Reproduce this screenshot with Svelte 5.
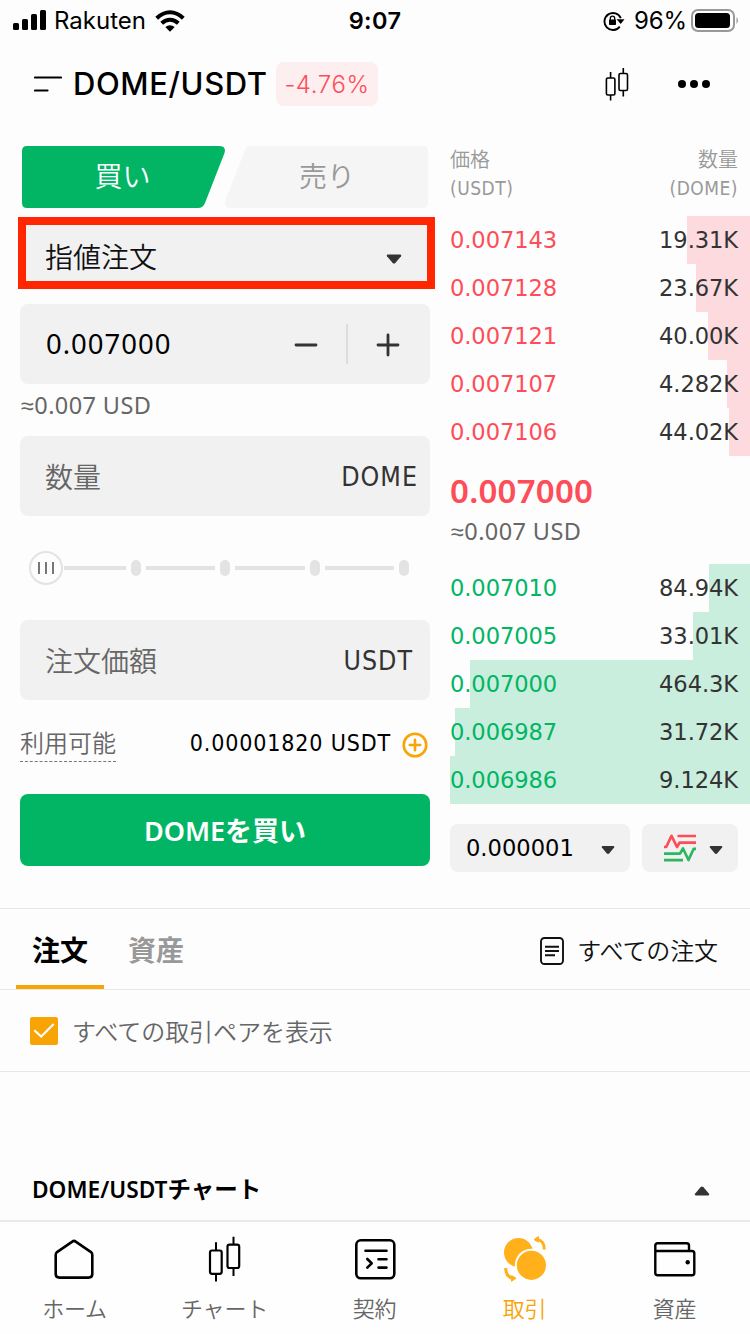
<script>
  const asks = [
    { price: '0.007143', amount: '19.31K', depth: 63 },
    { price: '0.007128', amount: '23.67K', depth: 54 },
    { price: '0.007121', amount: '40.00K', depth: 42.5 },
    { price: '0.007107', amount: '4.282K', depth: 23 },
    { price: '0.007106', amount: '44.02K', depth: 21 }
  ];
  const bids = [
    { price: '0.007010', amount: '84.94K', depth: 41 },
    { price: '0.007005', amount: '33.01K', depth: 57 },
    { price: '0.007000', amount: '464.3K', depth: 280 },
    { price: '0.006987', amount: '31.72K', depth: 295.5 },
    { price: '0.006986', amount: '9.124K', depth: 300 }
  ];
  const nav = [
    { id: 'home', label: 'ホーム' },
    { id: 'chart', label: 'チャート' },
    { id: 'contract', label: '契約' },
    { id: 'trade', label: '取引' },
    { id: 'wallet', label: '資産' }
  ];
</script>

{#snippet caret()}
  <svg class="caret" width="16" height="10" viewBox="0 0 16 10"><path d="M2 0.5H14Q16 0.7 15 2.2L9.3 8.9Q8 10 6.7 8.9L1 2.2Q0 0.7 2 0.5Z" fill="#333" /></svg>
{/snippet}

{#snippet rows(list, kind)}
  <div class="rows {kind}">
    {#each list as row}
      <div class="row">
        <i class="depth" style="width: {row.depth}px"></i>
        <span class="price">{row.price}</span>
        <span class="amount">{row.amount}</span>
      </div>
    {/each}
  </div>
{/snippet}

<div class="screen">
  <header class="status">
    <div class="carrier">
      <svg width="34" height="22" viewBox="0 0 34 22">
        <rect x="0" y="13" width="6" height="7" rx="1.5" /><rect x="9" y="9" width="6" height="11" rx="1.5" />
        <rect x="18" y="4" width="6" height="16" rx="1.5" /><rect x="27" y="0" width="6" height="20" rx="1.5" />
      </svg>
      <span class="name">Rakuten</span>
      <svg class="wifi" width="30" height="22" viewBox="0 0 30 22" fill="none" stroke="#000" stroke-width="4">
        <path d="M1.7 8.2Q8 2.2 15 2.2T28.300 8.2" /><path d="M6.700 13.200Q10.500 9.700 15 9.700T23.300 13.200" />
        <path d="M10.300 17Q15 13.400 19.700 17L15 21.700Z" fill="#000" stroke="none" />
      </svg>
    </div>
    <span class="time">9:07</span>
    <div class="power">
      <svg width="22" height="20" viewBox="0 0 22 20">
        <path d="M16.800 15.600A8.500 8.500 0 1 1 17.800 7.200" fill="none" stroke="#000" stroke-width="1.900" />
        <path d="M13.500 8.200H21.500L17.700 13Z" />
        <rect x="6" y="8.500" width="7" height="5.500" rx=".7" />
        <path d="M7.300 9V7.300a2.200 2.200 0 0 1 4.400 0V9" fill="none" stroke="#000" stroke-width="1.300" />
      </svg>
      <span class="pct">96%</span>
      <svg width="48" height="24" viewBox="0 0 48 24">
        <rect x="1" y="1" width="42" height="21" rx="6" fill="none" stroke="#999" stroke-width="2" />
        <rect x="4" y="4" width="35" height="15" rx="3.500" /><path d="M45.500 8Q48.500 11.500 45.500 15Z" fill="#999" />
      </svg>
    </div>
  </header>

  <div class="pairbar">
    <svg class="menu" width="28" height="18" viewBox="0 0 28 18"><path d="M1 2.500H27M1 15.500H13.500" stroke="#000" stroke-width="2.200" stroke-linecap="round" /></svg>
    <h1>DOME/USDT</h1>
    <span class="change">-4.76%</span>
    <svg class="candles" width="24" height="34" viewBox="0 0 24 34" fill="none" stroke="#000" stroke-width="1.600">
      <rect x="1.400" y="11" width="8.500" height="17" rx="1.500" /><rect x="14" y="6.500" width="8.500" height="17" rx="1.500" />
      <path d="M5.600 5V11M5.600 28V33.500M18.300 1V6.500M18.300 23.500V29.500" />
    </svg>
    <svg class="more" width="34" height="10" viewBox="0 0 34 10"><circle cx="5" cy="5" r="4" /><circle cx="17" cy="5" r="4" /><circle cx="29" cy="5" r="4" /></svg>
  </div>

  <main>
    <section class="form">
      <div class="sides">
        <div class="side">
          <svg width="203" height="62" viewBox="0 0 203 62"><path d="M5 0H197Q204.500 0 202.500 7L183 57Q181 62 176 62H5Q0 62 0 57V5Q0 0 5 0Z" fill="#02b564" /></svg>
          <span>買い</span>
        </div>
        <div class="side sell">
          <svg width="203" height="62" viewBox="0 0 203 62"><path d="M198 0H26Q21.500 0 20 4L.6 54Q-1.500 62 6 62H198Q203 62 203 57V5Q203 0 198 0Z" fill="#f5f5f5" /></svg>
          <span>売り</span>
        </div>
      </div>
      <div class="select"><span>指値注文</span>{@render caret()}</div>
      <div class="field stepper">
        <span class="value">0.007000</span>
        <svg width="24" height="24" viewBox="0 0 24 24"><path d="M2 12H22" stroke="#333" stroke-width="2.800" stroke-linecap="round" /></svg>
        <i class="rule"></i>
        <svg width="24" height="24" viewBox="0 0 24 24"><path d="M2 12H22M12 2V22" stroke="#333" stroke-width="2.800" stroke-linecap="round" /></svg>
      </div>
      <div class="approx">≈0.007 USD</div>
      <div class="field"><span class="hint">数量</span><span class="unit dome">DOME</span></div>
      <div class="slider">
        <i class="knob"><b></b><b></b><b></b></i>
        {#each [0, 1, 2, 3] as step}
          <i class="track" class:first={step === 0}></i><i class="stop"></i>
        {/each}
      </div>
      <div class="field"><span class="hint">注文価額</span><span class="unit usdt">USDT</span></div>
      <div class="available">
        <span class="label">利用可能</span>
        <span class="balance">0.00001820 USDT</span>
        <svg width="26" height="26" viewBox="0 0 26 26" fill="none" stroke="#f8a406" stroke-width="2.600"><circle cx="13" cy="13" r="11.300" /><path d="M7.800 13H18.200M13 7.800V18.200" stroke-linecap="round" /></svg>
      </div>
      <button class="buy"><span>DOME</span>を買い</button>
    </section>

    <section class="book">
      <div class="heads">
        <div>価格<br /><span>(USDT)</span></div>
        <div class="right">数量<br /><span>(DOME)</span></div>
      </div>
      {@render rows(asks, 'ask')}
      <div class="last">0.007000</div>
      <div class="approx">≈0.007 USD</div>
      {@render rows(bids, 'bid')}
      <div class="controls">
        <div class="tick"><span>0.000001</span>{@render caret()}</div>
        <div class="mode">
          <svg width="32" height="28" viewBox="0 0 32 28" fill="none" stroke-width="2.700" stroke-linejoin="round">
            <path d="M0 13H2.200L7.500 1.800L13 13L15.500 8.700H32M13.500 2H32" stroke="#fd4d59" />
            <path d="M0 19.700H16L19 14.500L24.500 26L29.700 14.800H32M0 26.200H19" stroke="#2bb65f" />
          </svg>
          {@render caret()}
        </div>
      </div>
    </section>
  </main>

  <div class="tabs">
    <span class="tab active">注文</span>
    <span class="tab">資産</span>
    <div class="all">
      <svg width="24" height="28" viewBox="0 0 24 28" fill="none" stroke="#111" stroke-width="1.900"><rect x="1" y="1" width="22" height="26" rx="3.500" /><path d="M5 9.800H19M5 14H19M5 18.200H15" /></svg>
      <span>すべての注文</span>
    </div>
  </div>
  <div class="filter">
    <svg width="28" height="28" viewBox="0 0 28 28"><rect width="28" height="28" rx="2" fill="#f8a406" /><path d="M4.300 13.200L11.200 19.500L23.700 7" fill="none" stroke="#fff" stroke-width="2.100" /></svg>
    <span>すべての取引ペアを表示</span>
  </div>
  <div class="chartbar"><div><span>DOME/USDT</span>チャート</div><i class="up">{@render caret()}</i></div>

  <nav>
    {#each nav as item}
      <div class="item" class:on={item.id === 'trade'}>
        <svg class={item.id} width="48" height="48" viewBox="0 0 48 48" fill="none" stroke="#000" stroke-width="2.600" stroke-linejoin="round">
          {#if item.id === 'home'}
            <path d="M22.300 5.600Q24 4.300 25.700 5.600L41 16.100Q42.300 17.200 42.300 19V38Q42.300 41.600 38.500 41.600H9.500Q5.700 41.600 5.700 38V19Q5.700 17.200 7 16.100Z" />
          {:else if item.id === 'chart'}
            <rect x="9" y="14.500" width="11.700" height="23.300" rx="2" stroke-width="2.200" /><rect x="26.500" y="8.700" width="11.700" height="23.300" rx="2" stroke-width="2.200" />
            <path stroke-width="2" d="M15 6.300V14.500M15 37.800V45.600M32.500 .8V8.700M32.500 32V40" />
          {:else if item.id === 'contract'}
            <rect x="5.300" y="4.300" width="38" height="38" rx="4.500" /><path d="M14.500 14.800H35.500M27.500 23.200H35.500M27.500 31.600H35.500M16.300 23L20.700 27.300L16.300 31.700" stroke-linecap="round" />
          {:else if item.id === 'trade'}
            <g fill="#ffb01b" stroke="none">
              <circle cx="17.500" cy="16.500" r="14.500" /><circle cx="30.400" cy="29.300" r="16.600" fill="#fefefe" /><circle cx="30.400" cy="29.300" r="14.600" />
              <path d="M33 3.600L37.500 .5V6.200Z" stroke="#ffb01b" stroke-width="1" /><path d="M15 42.200L10.500 45.300V39.600Z" stroke="#ffb01b" stroke-width="1" />
            </g>
            <path d="M36.500 3.400Q43.300 5 43.300 13.500" stroke="#ffb01b" stroke-width="3" /><path d="M4.700 32Q4.700 40.500 11.500 42.200" stroke="#ffb01b" stroke-width="3" />
          {:else}
            <path stroke-width="2.400" d="M39 15V9.500Q39 7.200 36.700 7.200H7.700Q5.300 7.200 5.300 9.500V37Q5.300 39.200 7.600 39.200H42Q44.300 39.200 44.300 37V17.300Q44.300 15 42 15H5.300" /><circle cx="37.700" cy="26.300" r="2.200" fill="#000" stroke="none" />
          {/if}
        </svg>
        <span>{item.label}</span>
      </div>
    {/each}
  </nav>
</div>

<style>
  :global(body) { margin: 0; background: #fdfdfd; }
  .screen { width: 750px; height: 1334px; overflow: hidden; display: flex; flex-direction: column; background: #fdfdfd; color: #000; font: 350 28px/40px "Noto Sans CJK JP", sans-serif; box-sizing: border-box; }
  .screen * { box-sizing: border-box; }
  svg { display: block; flex: none; }
  span { white-space: nowrap; }

  .status { height: 40px; display: grid; grid-template-columns: 1fr auto 1fr; align-items: center; padding: 0 11px 0 13px; font: 400 24px/40px Inter, sans-serif; }
  .carrier, .power { display: flex; align-items: center; }
  .name { margin: 0 0 0 7px; }
  .wifi { margin-left: 9px; }
  .time { font-weight: 600; font-size: 23.500px; letter-spacing: .4px; margin: 1px 2px 0 0; }
  .power { justify-content: flex-end; }
  .pct { margin: 0 4px 0 9px; letter-spacing: -.1px; }

  .pairbar { height: 88px; display: flex; align-items: center; padding: 0 39px 0 34px; font-family: Inter, sans-serif; }
  h1 { margin: 0 0 0 11px; font: 550 31px/40px Inter, sans-serif; letter-spacing: .6px; width: 193px; white-space: nowrap; }
  .change { margin-left: 10px; width: 102px; height: 44px; border-radius: 8px; background: #fdeeef; color: #fd4d59; font-size: 24px; letter-spacing: .6px; line-height: 45px; text-align: center; }
  .candles { margin-left: auto; }
  .more { margin-left: 48px; }

  main { height: 780px; display: grid; grid-template-columns: 410px 300px; column-gap: 20px; padding: 18px 0 0 20px; }
  .form, .book { display: flex; flex-direction: column; }
  .sides { display: flex; padding-left: 2px; height: 62px; }
  .side { display: grid; place-items: center; color: #fff; }
  .side > * { grid-area: 1 / 1; }
  .sell { color: #999; }
  .side span { margin: -5px 2px 0 0; }
  .sell span { margin: -5px 0 0 1px; }
  .select { position: relative; margin-top: 14px; height: 62px; padding: 0 28px 0 25px; display: flex; justify-content: space-between; align-items: center; background: #f1f1f1; border-radius: 8px; color: #111; }
  .select::after { content: ""; position: absolute; inset: -5px -5px -5px -2px; border: 8px solid #ff2600; }
  .select span { margin-top: 6px; }
  .select .caret { margin-top: 12px; }
  .field { height: 80px; display: flex; align-items: center; justify-content: space-between; padding: 0 12px 0 25px; border-radius: 8px; background: #f1f1f1; color: #666; }
  .hint { margin-top: 0; }
  .stepper { margin-top: 20px; padding: 2px 30px 0 26px; color: #000; }
  .unit, .balance, .heads span { font-family: "DejaVu Sans Condensed", "DejaVu Sans", sans-serif; font-stretch: condensed; font-weight: 400; }
  .value, .approx, .last { font-family: "Noto Sans", sans-serif; font-weight: 400; }
  .value { font-size: 27.500px; letter-spacing: 1px; margin-right: auto; margin-top: -2px; }
  .rule { width: 2px; height: 40px; background: #ddd; margin: -2px 28px 0; }
  .approx { height: 44px; margin-bottom: 8px; padding-left: 1px; font-size: 23.500px; line-height: 43px; color: #666; letter-spacing: .4px; }
  .unit { color: #333; font-size: 26.500px; letter-spacing: 1px; margin-top: 2px; }
  .usdt { margin-right: 5px; }
  .slider { height: 104px; display: flex; align-items: center; padding: 0 21px 0 9px; gap: 5px; }
  .slider i { flex: none; }
  .knob { width: 34px; height: 34px; margin-right: -4px; border: 2px solid #e3e3e3; border-radius: 50%; display: flex; justify-content: center; align-items: center; gap: 5px; }
  .knob b { width: 2px; height: 12px; background: #777; }
  .slider .track { flex: 1; height: 4px; background: #e3e3e3; }
  .slider .first { flex: 0 0 61.500px; }
  .stop { width: 10px; height: 16px; border-radius: 5px; background: #e3e3e3; }
  .available { height: 94px; display: flex; align-items: center; padding: 0 2px 6px 0; }
  .label { font-size: 24px; height: 37px; line-height: 34px; color: #666; border-bottom: 1px dashed #777; margin-top: -2px; }
  .balance { font-size: 23px; letter-spacing: .85px; margin: -2px 11px 0 auto; }
  .available svg { margin-top: 1px; }
  .buy { height: 72px; border: 0; border-radius: 8px; padding: 1px 0 0; background: #02b564; color: #fff; font: 700 27px/40px "Noto Sans CJK JP", sans-serif; }
  .buy span { font-family: "Noto Sans", sans-serif; font-weight: 600; }

  .heads { height: 70px; display: flex; justify-content: space-between; padding: 1px 12px 0 0; color: #999; font-size: 20px; line-height: 28px; margin-top: -2px; }
  .heads span { font-size: 19px; letter-spacing: .5px; }
  .heads + .rows { margin-top: 2px; }
  .right { text-align: right; }
  .row { position: relative; height: 48px; display: flex; justify-content: space-between; padding-right: 12px; font-size: 22.600px; line-height: 49px; }
  .depth { position: absolute; right: 0; top: 0; height: 48px; background: #fcdadd; }
  .bid .depth { background: #c9eedd; }
  .price, .amount, .tick { font-family: "DejaVu Sans", sans-serif; font-weight: 400; }
  .price, .amount { position: relative; color: #fd4d59; letter-spacing: -.1px; }
  .bid .price { color: #02b564; }
  .row .amount { color: #333; }
  .last { margin-top: 14px; height: 42px; line-height: 41px; font-size: 33px; font-weight: 600; letter-spacing: .25px; color: #fd4d59; }
  .book .approx { margin: -2px 0 10px; }
  .controls { margin-top: 20px; display: flex; gap: 12px; }
  .tick, .mode { height: 48px; border-radius: 8px; background: #f1f1f1; display: flex; align-items: center; justify-content: space-between; }
  .tick { width: 180px; padding: 0 15px 0 16px; font-size: 22.600px; }
  .mode { width: 96px; padding: 0 15px 0 22px; }
  .controls .caret { width: 14px; margin-top: 3px; }

  .tabs { height: 82px; border: solid #e7e7e7; border-width: 1px 0; display: flex; padding: 0 32px 0 16px; }
  .tab { padding: 0 16px; line-height: 80px; font-weight: 700; color: #999; margin-right: 8px; height: 80px; }
  .active { color: #000; border-bottom: 4px solid #f8a406; }
  .all { margin-left: auto; display: flex; align-items: center; gap: 13px; color: #111; font-size: 24px; letter-spacing: -.1px; }
  .all svg { margin-top: 3px; }
  .all span { margin-top: 1px; }
  .filter { height: 82px; border-bottom: 1px solid #e7e7e7; display: flex; align-items: center; gap: 14px; padding-left: 30px; color: #666; font-size: 24px; letter-spacing: -.05px; }
  .filter span { margin-top: 1px; }
  .chartbar { margin-top: 88px; height: 60px; padding: 0 40px 3px 32px; display: flex; align-items: center; justify-content: space-between; font-size: 23.500px; font-weight: 700; }
  .chartbar span { font-family: "Noto Sans", sans-serif; font-weight: 600; font-size: 22.700px; }
  .up { transform: rotate(180deg); margin-top: 4px; }
  nav { flex: 1; border-top: 2px solid #e9e9e9; background: #fefefe; display: grid; grid-template-columns: repeat(5, 1fr); padding-top: 14px; }
  .item { display: flex; flex-direction: column; align-items: center; color: #666; font-size: 22px; line-height: 40px; padding-right: 1px; }
  .home, .wallet { margin-right: 1px; }
  .trade { margin-left: 1px; }
  .item span { margin-top: 3px; letter-spacing: -.2px; }
  .on { color: #f8a406; }
</style>
